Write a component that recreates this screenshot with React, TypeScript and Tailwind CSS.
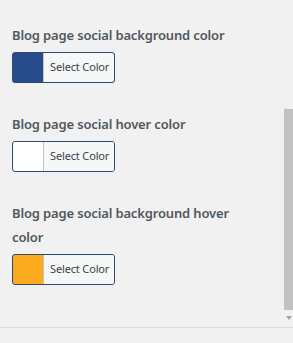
import React from 'react';

type ColorField = {
  label: string;
  color: string;
};

const fields: ColorField[] = [
  { label: 'Blog page social background color', color: '#284b8c' },
  { label: 'Blog page social hover color', color: '#ffffff' },
  { label: 'Blog page social background hover color', color: '#fcab1e' },
];

const ColorButton = ({ color }: { color: string }) => (
  <button
    type="button"
    className="flex h-[31px] w-[103px] overflow-hidden rounded-[3px] border border-[#2c4b6e] p-0 text-left"
    style={{ backgroundColor: color }}
  >
    <span className="w-[30px] shrink-0" />
    <span className="flex h-full flex-1 items-center border-l border-[#c3c4c7] bg-[#f6f7f7] pl-[6px] text-[11px] tracking-[-0.15px] text-[#3c434a]">
      Select Color
    </span>
  </button>
);

export default function App() {
  return (
    <div
      className="relative h-[343px] w-[293px] overflow-hidden bg-[#f1f1f1]"
      style={{ fontFamily: '"Noto Sans", "Open Sans", sans-serif' }}
    >
      <div className="h-[328px] border-b border-[#dcdcde] pl-3 pt-[23px]">
        <div className="flex w-[238px] flex-col gap-[29px]">
          {fields.map((f) => (
            <div key={f.label}>
              <p className="mb-[5px] text-[13px] font-semibold leading-6 tracking-[-0.15px] text-[#50575e]">
                {f.label}
              </p>
              <ColorButton color={f.color} />
            </div>
          ))}
        </div>
      </div>

      {/* scrollbar */}
      <div className="absolute right-0 top-[109px] h-[201px] w-[9px] bg-[#c1c1c1]" />
      <div className="absolute right-[1px] top-[316px] h-0 w-0 border-x-[3.5px] border-t-[4px] border-x-transparent border-t-[#a3a3a3]" />
    </div>
  );
}
